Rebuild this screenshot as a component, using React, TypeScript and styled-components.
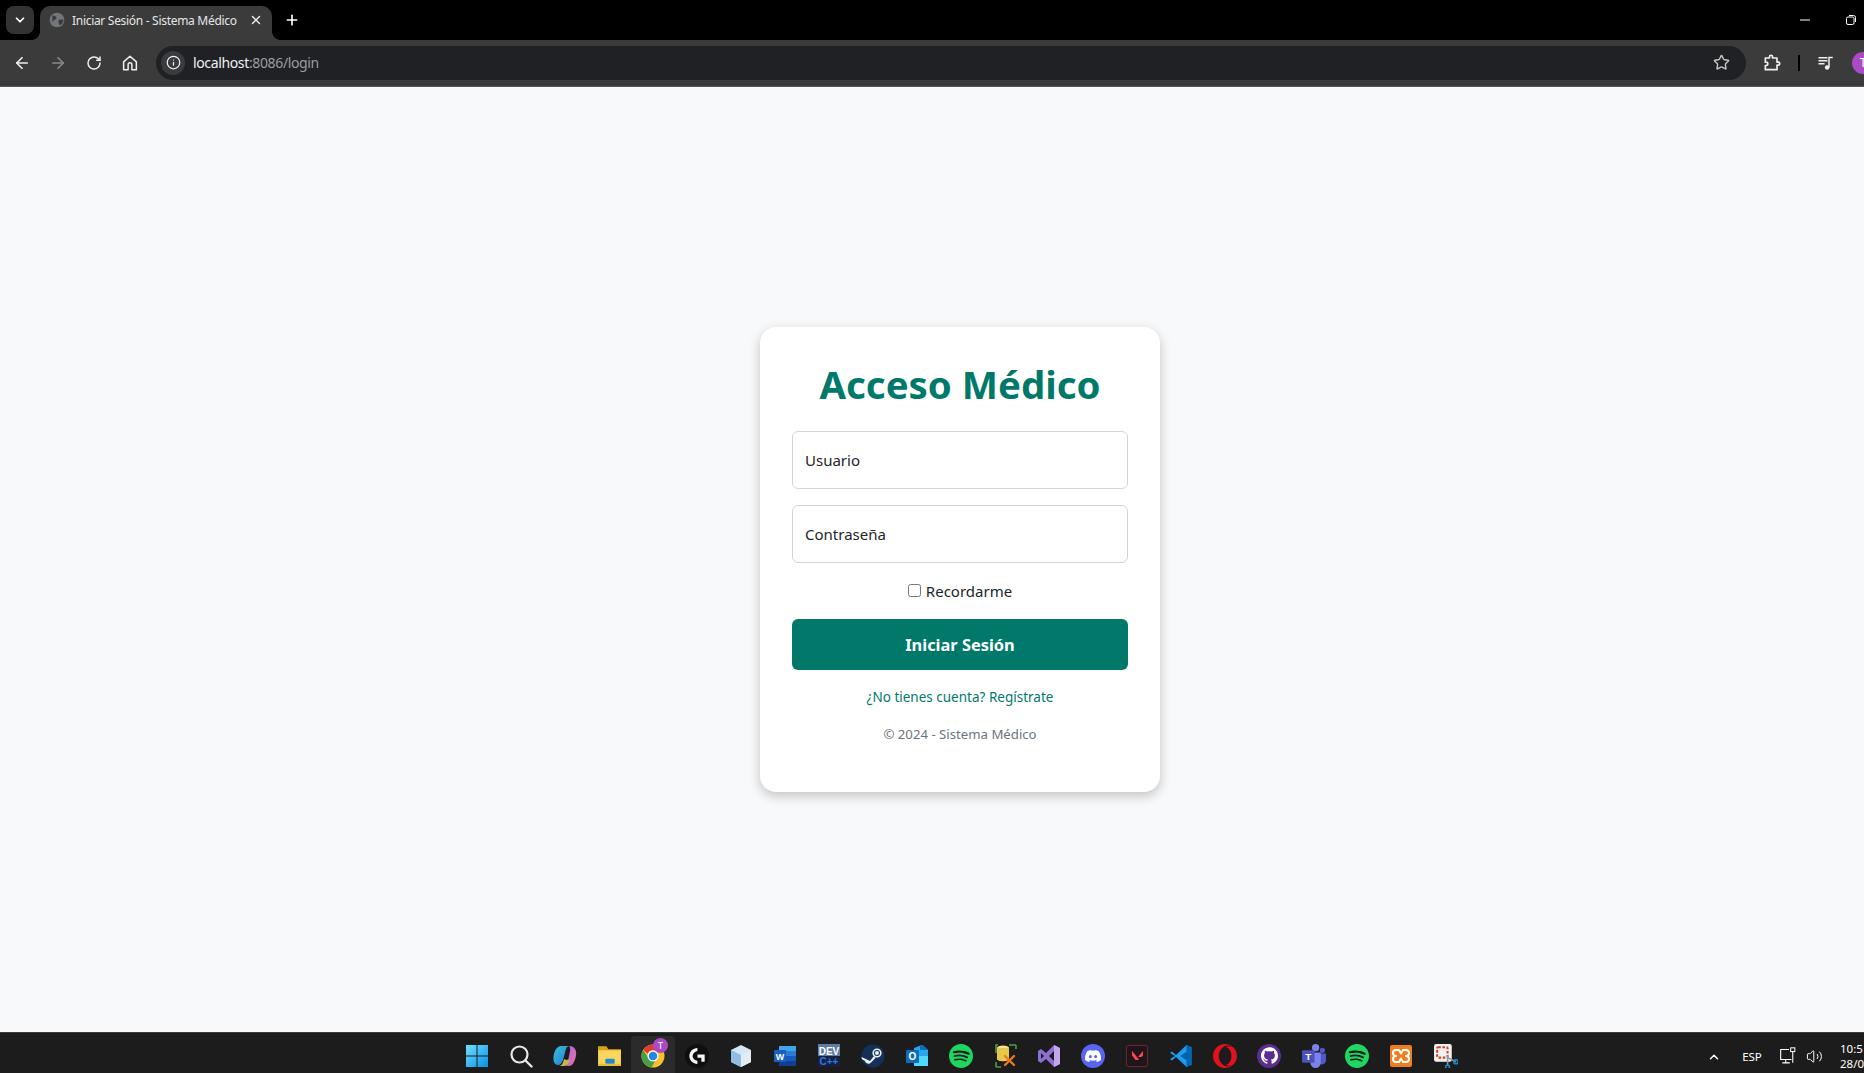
import React from "react";
import styled, { createGlobalStyle } from "styled-components";
import { ArrowLeft, ArrowRight, RotateCw, Info, Star, ChevronDown, X, Plus, ChevronUp, Volume2 } from "lucide-react";
import { SiSpotify, SiDiscord, SiGithub, SiValorant, SiOpera, SiLogitechg } from "react-icons/si";

const Global = createGlobalStyle`
  html, body { margin: 0; padding: 0; height: 100%; overflow: hidden; }
  body { font-family: "Noto Sans", "Open Sans", sans-serif; background: #f8f9fa; }
  * { box-sizing: border-box; }
`;

const Screen = styled.div`
  width: 1920px; height: 1080px; display: flex; flex-direction: column; overflow: hidden;
`;
const TabStrip = styled.div`
  height: 40px; background: #000; display: flex; align-items: flex-end; padding-left: 6px; flex: none;
`;
const TabListButton = styled.div`
  width: 28px; height: 28px; margin-bottom: 6px; border-radius: 8px; background: #333;
  display: flex; align-items: center; justify-content: center; color: #fff;
`;
const Tab = styled.div`
  width: 232px; height: 34px; margin-left: 6px; background: #3b3b3b; border-radius: 10px 10px 0 0;
  display: flex; align-items: center; padding: 0 9px 6px 9px; color: #e8eaed; position: relative;
  &::before, &::after {
    content: ""; position: absolute; bottom: 0; width: 8px; height: 8px;
  }
  &::before { left: -8px; background: radial-gradient(circle at 0 0, #000 7.500px, #3b3b3b 8px); }
  &::after { right: -8px; background: radial-gradient(circle at 100% 0, #000 7.500px, #3b3b3b 8px); }
`;
const TabTitle = styled.span`
  font-size: 12px; margin-left: 7px; flex: 1; white-space: nowrap; color: #e6e6e6; letter-spacing: -0.3px;
`;
const NewTab = styled.div`
  width: 28px; height: 28px; margin: 0 0 6px 6px; display: flex; align-items: center; justify-content: center; color: #fff;
`;
const WindowControls = styled.div`
  margin-left: auto; height: 40px; display: flex; align-items: center; color: #fff; align-self: flex-start;
`;
const WindowButton = styled.div`
  width: 46px; display: flex; align-items: center; justify-content: center;
`;
const Toolbar = styled.div`
  height: 47px; background: #3b3b3b; display: flex; align-items: center; flex: none; padding: 0 0 1px 4px;
  border-bottom: 1px solid #585858;
`;
const NavButton = styled.div<{ $dim?: boolean }>`
  width: 36px; height: 36px; display: flex; align-items: center; justify-content: center;
  color: ${p => (p.$dim ? "#8a8a8a" : "#f0f0f0")};
`;
const Omnibox = styled.div`
  width: 1590px; height: 34px; margin-left: 8px; background: #202124; border-radius: 17px;
  display: flex; align-items: center; padding: 0 7px 0 5px; flex: none;
`;
const InfoChip = styled.div`
  width: 24px; height: 24px; border-radius: 50%; background: #3a3b3e; color: #f0f0f0;
  display: flex; align-items: center; justify-content: center;
`;
const Url = styled.span`
  font-size: 14px; color: #f1f1f1; margin-left: 8px; flex: 1; letter-spacing: -0.36px;
`;
const UrlPath = styled.span`
  color: #9a9da1;
`;
const ToolbarIcon = styled.div`
  width: 36px; height: 36px; margin-left: 8px; display: flex; align-items: center; justify-content: center; color: #f0f0f0; flex: none;
`;
const StarButton = styled(ToolbarIcon)`
  color: #c4c7c5; margin-left: 0;
`;
const Separator = styled.div`
  width: 2px; height: 16px; background: #000; margin-left: 8px; flex: none;
`;
const Avatar = styled.div`
  width: 22px; height: 22px; border-radius: 50%; background: #a94bc4; color: #fff; font-size: 12px;
  display: flex; align-items: center; justify-content: center; margin-left: 8px; flex: none;
`;
const Page = styled.main`
  flex: 1; display: flex; align-items: center; justify-content: center; background: #f8f9fa;
`;
const Card = styled.div`
  width: 400px; height: 465px; background: #fff; border-radius: 16px; padding: 32px;
  box-shadow: 0 4px 12px rgba(0,0,0,.22); display: flex; flex-direction: column;
`;
const Title = styled.h1`
  margin: 0 0 19px; font-size: 38.400px; line-height: 51px; padding-bottom: 2px; font-weight: 700; color: #00796b; text-align: center; white-space: nowrap;
`;
const Field = styled.input`
  width: 100%; height: 58px; border: 1px solid #ced4da; border-radius: 6px; padding: 0 12px; font: inherit; font-size: 15px;
  margin-bottom: 16px; background: #fff; color: #212529; flex: none;
  &::placeholder { color: #212529; opacity: 1; }
`;
const RememberRow = styled.label`
  display: flex; align-items: center; justify-content: center; gap: 5px; font-size: 15px; line-height: 24px; color: #212529; height: 24px; margin-bottom: 16px;
`;
const Check = styled.input`
  width: 13px; height: 13px; margin: 0 0 2px;
`;
const Submit = styled.button`
  height: 51px; flex: none; background: #00796b; color: #fff; border: 0; border-radius: 6px; font: inherit; font-size: 16.400px; font-weight: 700; margin-bottom: 16px;
`;
const RegisterLink = styled.a`
  font-size: 13.500px; line-height: 22px; color: #00796b; text-align: center; text-decoration: none; margin-bottom: 15px;
`;
const Copyright = styled.p`
  margin: 0; font-size: 13.200px; line-height: 22px; color: #6c757d; text-align: center;
`;
const Taskbar = styled.footer`
  height: 48px; flex: none; background: #1c1c1c; border-top: 1px solid #3a3a3a;
  display: grid; grid-template-columns: 1fr auto 1fr; align-items: center;
`;
const TaskApps = styled.div`
  grid-column: 2; display: flex; align-items: center; margin: 0 0 2px 2px;
`;
const TaskItem = styled.div<{ $active?: boolean }>`
  width: 44px; height: 40px; flex: none; display: flex; align-items: center; justify-content: center; position: relative;
  ${p => p.$active ? "background:#2b2b2b; border-radius:4px;" : ""}
`;
const RunDot = styled.span<{ $accent?: boolean }>`
  position: absolute; bottom: 0; left: 50%; width: ${p => (p.$accent ? "14px" : "6px")}; height: 3px; margin-left: ${p => (p.$accent ? "-7px" : "-3px")};
  border-radius: 2px; background: ${p => (p.$accent ? "#c98f8f" : "#9a9a9a")};
`;
const ChromeBadge = styled.span`
  position: absolute; top: 2px; right: 7px; width: 15px; height: 15px; border-radius: 50%; background: #a94bc4; color: #fff; font-size: 9px;
  display: flex; align-items: center; justify-content: center;
`;
const Tray = styled.div`
  grid-column: 3; justify-self: end; height: 47px; display: flex; align-items: center; color: #fff; white-space: nowrap; width: 213px;
`;
const TrayIcon = styled.div<{ $w: number; $gap: number }>`
  width: ${p => p.$w}px; margin-left: ${p => p.$gap}px; display: flex; align-items: center; justify-content: center; flex: none;
`;
const Lang = styled.span`
  font-size: 11.500px; width: 40px; text-align: center; margin-left: 11px;
`;
const Clock = styled.div`
  font-size: 11.500px; line-height: 15px; margin-left: 16px; text-align: left; padding-bottom: 1px;
`;

const S = ({ children, size = 24, vb = "0 0 24 24" }: { children: React.ReactNode; size?: number; vb?: string }) => (
  <svg width={size} height={size} viewBox={vb} fill="none">{children}</svg>
);

const HomeIcon = () => (
  <S size={18}><path d="M3.500 10.500 12 3l8.500 7.500V21h-6v-7a2.500 2.500 0 0 0-5 0v7h-6z" stroke="currentColor" strokeWidth="2" strokeLinejoin="round" /></S>
);
const PuzzleIcon = () => (
  <S size={20}><path d="M4 6h5V4.500a1.800 1.800 0 0 1 3.600 0V6H18v5h1.500a1.800 1.800 0 0 1 0 3.600H18V20H4v-5h1a2 2 0 0 0 0-4H4z" stroke="currentColor" strokeWidth="2" strokeLinejoin="round" /></S>
);
const QueueIcon = () => (
  <S size={18}><path d="M2 5h12M2 9h12M2 13h8" stroke="currentColor" strokeWidth="1.800" /><path d="M16 18V4.500h5" stroke="currentColor" strokeWidth="2" /><circle cx="13.500" cy="18" r="3" fill="currentColor" /></S>
);
const GlobeFavicon = () => (
  <S size={16}><circle cx="12" cy="12" r="11" fill="#72757a" /><path d="M5 5c3 1 5 1 6 3s-1 3-3 4-3 3-3 5M15 12c2-1 5-1 7 0-1 4-3 7-6 8-1-3-3-6-1-8z" fill="#3b3b3b" /></S>
);
const MinimizeIcon = () => (
  <svg width="10" height="10" viewBox="0 0 10 10" fill="none"><path d="M0 5h10" stroke="currentColor" /></svg>
);
const RestoreIcon = () => (
  <svg width="10" height="10" viewBox="0 0 10 10" fill="none"><rect x=".5" y="2" width="7.500" height="7.500" rx="1.500" stroke="currentColor" /><path d="M3 .5h4.500a2 2 0 0 1 2 2V7" stroke="currentColor" /></svg>
);

const WinLogo = () => (
  <S size={24}>
    <defs><linearGradient id="w" x1="0" y1="0" x2="1" y2="1"><stop offset="0" stopColor="#6fe0ff" /><stop offset="1" stopColor="#0a8fe6" /></linearGradient></defs>
    <path d="M1 1h10.500v10.500H1zM12.500 1H23v10.500H12.500zM1 12.500h10.500V23H1zM12.500 12.500H23V23H12.500z" fill="url(#w)" />
  </S>
);
const SearchIcon = () => (
  <S size={24}><circle cx="10.500" cy="10.500" r="8" stroke="#e8e8e8" strokeWidth="2.200" /><path d="m16.500 16.500 6 6" stroke="#e8e8e8" strokeWidth="2.400" strokeLinecap="round" /></S>
);
const CopilotIcon = () => (
  <S size={24}>
    <defs>
      <linearGradient id="c1" x1="0" y1="0" x2="1" y2="1"><stop offset="0" stopColor="#2fc8d6" /><stop offset="1" stopColor="#2f6fd8" /></linearGradient>
      <linearGradient id="c2" x1="0" y1="0" x2="1" y2="1"><stop offset="0" stopColor="#a86ae8" /><stop offset="1" stopColor="#f06ca0" /></linearGradient>
      <linearGradient id="c3" x1="0" y1="0" x2="1" y2="1"><stop offset="0" stopColor="#7fcf60" /><stop offset="1" stopColor="#f2a93c" /></linearGradient>
    </defs>
    <path d="M8 2h8c-3 1-3 3-4 7l-2 7c-1 3-3 5-5 5-3 0-5-3-4.500-8C1 7 4 2 8 2z" fill="url(#c1)" />
    <path d="M13 22h3c3 0 5-3 6.500-8 1-4 1-7-.500-9-1-2-3-3-6-3 2 2 1 6 0 10s-1 8-3 10z" fill="url(#c2)" />
    <path d="M6 22c3 0 4-3 5-7 2 1 4 1 6 .500-1 3-3 6.500-6 6.500z" fill="url(#c3)" />
  </S>
);
const FolderIcon = () => (
  <S size={25}>
    <path d="M1 3h8l2 3h12v3H1z" fill="#d9a21b" />
    <path d="M1 7h22v15H1z" fill="#f9d65c" />
    <rect x="8" y="15" width="9" height="5" rx="1" fill="#1e88d6" />
    <rect x="1" y="20" width="22" height="2" fill="#e7b938" />
  </S>
);
const ChromeIcon = () => (
  <S size={24}>
    <circle cx="12" cy="12" r="11.500" fill="#fbc02d" />
    <path d="M12 .5A11.500 11.500 0 0 1 22 6.300H12a5.800 5.800 0 0 0-5.300 3.400L2.200 6A11.500 11.500 0 0 1 12 .5z" fill="#e53935" />
    <path d="M2 6a11.500 11.500 0 0 0 8.500 17.400l4.500-7.800a5.800 5.800 0 0 1-8-2.300z" fill="#43a047" />
    <circle cx="12" cy="12" r="5.500" fill="#fff" /><circle cx="12" cy="12" r="4.300" fill="#1e88e5" />
  </S>
);
const LogiCircle = styled.span`
  display: flex; width: 24px; height: 24px; border-radius: 50%; background: #0f0f0f; align-items: center; justify-content: center;
`;
const CubeIcon = () => (
  <S size={24}>
    <path d="M12 1 22 6v12l-10 5L2 18V6z" fill="#d5e6f4" />
    <path d="M12 11 2 6v12l10 5z" fill="#8fbde6" /><path d="M12 11l10-5v12l-10 5z" fill="#e3ecf3" />
  </S>
);
const WordIcon = () => (
  <S size={24}>
    <rect x="6" y="2" width="17" height="20" rx="1.500" fill="#2b7cd3" />
    <rect x="6" y="12" width="17" height="5" fill="#185abd" /><rect x="6" y="17" width="17" height="5" rx="1" fill="#103f91" />
    <rect x="6" y="2" width="17" height="5" fill="#41a5ee" />
    <rect x="1" y="6" width="12" height="12" rx="1" fill="#1a5fc0" />
    <text x="7" y="15.500" fontSize="9" fontWeight="700" fill="#fff" textAnchor="middle" fontFamily="Liberation Sans">W</text>
  </S>
);
const DevCppIcon = () => (
  <S size={24}>
    <rect x="1" y="0" width="22" height="23" fill="#5d7ca6" />
    <rect x="1" y="12" width="22" height="11" fill="#16213f" />
    <text x="12" y="10.500" fontSize="10" fontWeight="700" fill="#fff" textAnchor="middle" fontFamily="Liberation Sans">DEV</text>
    <text x="12" y="21" fontSize="10" fontWeight="700" fill="#2a7be0" textAnchor="middle" fontFamily="Liberation Sans">C++</text>
  </S>
);
const SteamIcon = () => (
  <S size={24}>
    <circle cx="12" cy="12" r="11.500" fill="#12305a" />
    <circle cx="16" cy="9" r="3.800" stroke="#eef2f6" strokeWidth="1.600" />
    <circle cx="16" cy="9" r="2" fill="#eef2f6" />
    <path d="M.5 13 9 17l4-5 1.500 2-4.500 4.500a3.500 3.500 0 0 1-6-1.500L.8 15z" fill="#eef2f6" />
  </S>
);
const OutlookIcon = () => (
  <S size={24}>
    <path d="M9 4 17 1l6 5v16H9z" fill="#28a8ea" /><path d="M9 12h14v10H9z" fill="#50d9ff" /><path d="M15 1h3l5 5h-8z" fill="#0f6cbd" />
    <rect x="1" y="6" width="13" height="13" rx="1" fill="#0f6cbd" />
    <text x="7.500" y="16" fontSize="10" fontWeight="700" fill="#fff" textAnchor="middle" fontFamily="Liberation Sans">O</text>
  </S>
);
const DbToolIcon = () => (
  <S size={24}>
    <path d="M3 9V1h2M23 1v4M3 23v-5M3 23h5M16 1h7" stroke="#4c9a4c" strokeWidth="1.600" />
    <ellipse cx="10" cy="4" rx="6" ry="2.500" fill="#f5e28a" /><path d="M4 4v11c0 3 12 3 12 0V4z" fill="#e8c84a" />
    <path d="m12 21 9-9M21 21l-9-9" stroke="#e8781e" strokeWidth="2.400" strokeLinecap="round" />
  </S>
);
const VsIcon = () => (
  <S size={24}>
    <path d="M17 1 23 4v16l-6 3-8-8-5 4-3-2V7l3-2 5 4zM17 7l-5 5 5 5zM4 9v6l3-3z" fill="#8f6fd0" />
    <path d="M17 1l6 3v16l-6 3z" fill="#c1a5f0" />
  </S>
);
const DiscordBadge = styled.span`
  display: flex; width: 24px; height: 24px; border-radius: 50%; background: #5865f2; align-items: center; justify-content: center;
`;
const ValorantBox = styled.span`
  display: flex; width: 22px; height: 22px; border: 1.500px solid #6b2530; border-radius: 2px; background: #201518; align-items: center; justify-content: center;
`;
const VsCodeIcon = () => (
  <S size={24}>
    <path d="M17.500 1 23 3.500v17L17.500 23 7 13l-4 3.500L1 15l5-3-5-3 2-1.500L7 11z" fill="#1f9cf0" />
    <path d="M17.500 1 23 3.500v17L17.500 23 17.500 16.500 11.500 12l6-4.500z" fill="#0065a9" />
  </S>
);
const GithubBadge = styled.span`
  display: flex; width: 24px; height: 24px; border-radius: 50%; background: #5b2d91; align-items: center; justify-content: center;
`;
const TeamsIcon = () => (
  <S size={25}>
    <circle cx="14" cy="4.500" r="3.500" fill="#7b83eb" /><circle cx="20.500" cy="7" r="2.500" fill="#5059c9" />
    <path d="M17 10h7v7a4 4 0 0 1-6 3z" fill="#5059c9" /><path d="M8 9h11v10a5 5 0 0 1-10 0z" fill="#7b83eb" />
    <rect x="1" y="7" width="12" height="12" rx="1" fill="#4b53bc" />
    <text x="7" y="16.500" fontSize="9.500" fontWeight="700" fill="#fff" textAnchor="middle" fontFamily="Liberation Sans">T</text>
  </S>
);
const XamppIcon = () => (
  <S size={24}>
    <rect x="1" y="1" width="22" height="22" rx="2" fill="#f07d1e" />
    <path d="M7 6h3l2 3.500L14 6h3a2.500 2.500 0 0 1 0 6 2.500 2.500 0 0 1 0 6h-3l-2-3.500L10 18H7a2.500 2.500 0 0 1 0-6 2.500 2.500 0 0 1 0-6z" stroke="#fff" strokeWidth="2" strokeLinejoin="round" />
  </S>
);
const SnipIcon = () => (
  <S size={25}>
    <rect x="1" y="1" width="17" height="17" rx="2" fill="#f2f2f2" />
    <rect x="4" y="4" width="10" height="10" rx="1" fill="none" stroke="#d6401f" strokeWidth="2" strokeDasharray="2.500 1.500" />
    <path d="m14 14 8 4M14 22V12" stroke="#8a9ba8" strokeWidth="1.500" />
    <circle cx="22" cy="18" r="2" stroke="#1e88d6" strokeWidth="1.500" /><circle cx="14" cy="23" r="1.800" stroke="#1e88d6" strokeWidth="1.500" />
  </S>
);
const MonitorNet = () => (
  <S size={20}><path d="M12 3H2v12h13M8 15v4M4 19h9" stroke="#fff" strokeWidth="1.300" /><rect x="14" y="1" width="5" height="4.500" stroke="#fff" strokeWidth="1.200" /><path d="M16.500 5.500V19" stroke="#fff" strokeWidth="1.300" /></S>
);

const apps: { icon: React.ReactNode; dot?: boolean; accent?: boolean; active?: boolean; badge?: boolean }[] = [
  { icon: <WinLogo /> },
  { icon: <SearchIcon /> },
  { icon: <CopilotIcon /> },
  { icon: <FolderIcon />, dot: true },
  { icon: <ChromeIcon />, active: true, badge: true, accent: true },
  { icon: <LogiCircle><SiLogitechg size={16} color="#f5f5f5" /></LogiCircle> },
  { icon: <CubeIcon /> },
  { icon: <WordIcon /> },
  { icon: <DevCppIcon /> },
  { icon: <SteamIcon /> },
  { icon: <OutlookIcon /> },
  { icon: <SiSpotify size={24} color="#1ed760" /> },
  { icon: <DbToolIcon /> },
  { icon: <VsIcon /> },
  { icon: <DiscordBadge><SiDiscord size={16} color="#fff" /></DiscordBadge> },
  { icon: <ValorantBox><SiValorant size={11} color="#ff4655" /></ValorantBox> },
  { icon: <VsCodeIcon />, dot: true },
  { icon: <SiOpera size={24} color="#e3101e" /> },
  { icon: <GithubBadge><SiGithub size={17} color="#fff" /></GithubBadge> },
  { icon: <TeamsIcon /> },
  { icon: <SiSpotify size={24} color="#1ed760" />, dot: true },
  { icon: <XamppIcon />, dot: true },
  { icon: <SnipIcon />, dot: true },
];

export default function App() {
  return (
    <Screen>
      <Global />
      <TabStrip>
        <TabListButton><ChevronDown size={14} strokeWidth={3} /></TabListButton>
        <Tab>
          <GlobeFavicon />
          <TabTitle>Iniciar Sesión - Sistema Médico</TabTitle>
          <X size={14} strokeWidth={2.500} />
        </Tab>
        <NewTab><Plus size={16} strokeWidth={2.500} /></NewTab>
        <WindowControls>
          <WindowButton><MinimizeIcon /></WindowButton>
          <WindowButton><RestoreIcon /></WindowButton>
          <WindowButton><X size={12} /></WindowButton>
        </WindowControls>
      </TabStrip>
      <Toolbar>
        <NavButton><ArrowLeft size={18} strokeWidth={2.200} /></NavButton>
        <NavButton $dim><ArrowRight size={18} strokeWidth={2.200} /></NavButton>
        <NavButton><RotateCw size={16} strokeWidth={2.200} /></NavButton>
        <NavButton><HomeIcon /></NavButton>
        <Omnibox>
          <InfoChip><Info size={15} /></InfoChip>
          <Url>localhost<UrlPath>:8086/login</UrlPath></Url>
          <StarButton><Star size={17} strokeWidth={2} /></StarButton>
        </Omnibox>
        <ToolbarIcon><PuzzleIcon /></ToolbarIcon>
        <Separator />
        <ToolbarIcon><QueueIcon /></ToolbarIcon>
        <Avatar>T</Avatar>
      </Toolbar>
      <Page>
        <Card>
          <Title>Acceso Médico</Title>
          <Field placeholder="Usuario" />
          <Field placeholder="Contraseña" type="password" />
          <RememberRow><Check type="checkbox" /> Recordarme</RememberRow>
          <Submit>Iniciar Sesión</Submit>
          <RegisterLink href="#">¿No tienes cuenta? Regístrate</RegisterLink>
          <Copyright>© 2024 - Sistema Médico</Copyright>
        </Card>
      </Page>
      <Taskbar>
        <TaskApps>
          {apps.map((a, i) => (
            <TaskItem key={i} $active={a.active}>
              {a.icon}
              {a.badge && <ChromeBadge>T</ChromeBadge>}
              {(a.dot || a.accent) && <RunDot $accent={a.accent} />}
            </TaskItem>
          ))}
        </TaskApps>
        <Tray>
          <TrayIcon $w={14} $gap={0}><ChevronUp size={16} strokeWidth={2.500} /></TrayIcon>
          <Lang>ESP</Lang>
          <TrayIcon $w={20} $gap={7}><MonitorNet /></TrayIcon>
          <TrayIcon $w={20} $gap={5}><Volume2 size={17} strokeWidth={1.400} /></TrayIcon>
          <Clock>10:5<br />28/0</Clock>
        </Tray>
      </Taskbar>
    </Screen>
  );
}
